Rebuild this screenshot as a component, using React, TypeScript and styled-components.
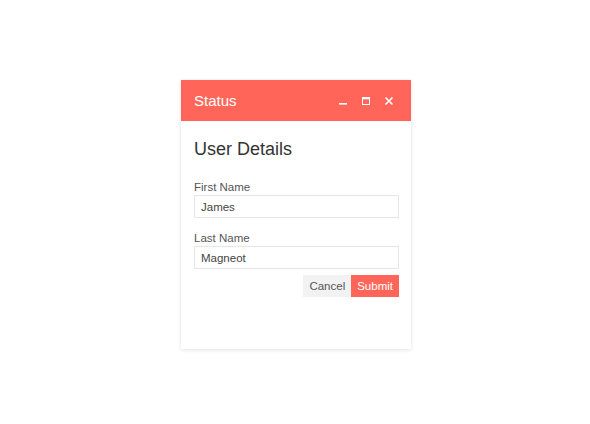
import React from 'react';
import styled, { createGlobalStyle } from 'styled-components';

const GlobalStyle = createGlobalStyle`
  html, body {
    margin: 0;
    padding: 0;
    background: #ffffff;
    font-family: "Liberation Sans", Arial, sans-serif;
  }
`;

const Page = styled.div`
  width: 590px;
  height: 424px;
  display: flex;
  justify-content: center;
  align-items: flex-start;
  padding: 80px 0 0 2px;
  box-sizing: border-box;
`;

const Window = styled.div`
  width: 230px;
  height: 269px;
  background: #fff;
  box-shadow: 0 1px 4px rgba(0, 0, 0, 0.12);
  display: flex;
  flex-direction: column;
`;

const TitleBar = styled.div`
  height: 41px;
  background: #ff6659;
  display: flex;
  align-items: center;
  padding: 0 13px;
  color: #fff;
`;

const Title = styled.div`
  flex: 1;
  font-size: 15px;
`;

const Controls = styled.div`
  display: flex;
  align-items: center;
  gap: 10px;
  margin-right: 3px;
`;

const ControlButton = styled.button`
  width: 13px;
  height: 13px;
  padding: 0;
  border: none;
  background: none;
  color: #fff;
  display: flex;
  align-items: center;
  justify-content: center;
  cursor: pointer;
`;

const Body = styled.div`
  padding: 18px 12px 0 13px;
  display: flex;
  flex-direction: column;
`;

const Heading = styled.h2`
  margin: 0 0 21px 0;
  font-size: 18px;
  font-weight: 400;
  color: #333;
`;

const Field = styled.div`
  display: flex;
  flex-direction: column;
  margin-bottom: 14px;
`;

const Label = styled.label`
  font-size: 11.5px;
  color: #555;
  margin-bottom: 2px;
`;

const Input = styled.input`
  height: 23px;
  box-sizing: border-box;
  border: 1px solid #e6e6e6;
  padding: 0 6px;
  font-family: inherit;
  font-size: 11.5px;
  color: #444;
  outline: none;
`;

const Actions = styled.div`
  display: flex;
  justify-content: flex-end;
  margin-top: -8px;
`;

const Button = styled.button<{ $primary?: boolean }>`
  height: 22px;
  padding: 0 6px;
  border: none;
  font-family: inherit;
  font-size: 11.5px;
  cursor: pointer;
  background: ${p => (p.$primary ? '#ff6659' : '#f2f2f2')};
  color: ${p => (p.$primary ? '#fff' : '#555')};
`;

export default function App() {
  return (
    <>
      <GlobalStyle />
      <Page>
        <Window>
          <TitleBar>
            <Title>Status</Title>
            <Controls>
              <ControlButton aria-label="minimize">
                <svg width="10" height="10" viewBox="0 0 10 10">
                  <rect x="1" y="7" width="8" height="1.6" fill="#fff" />
                </svg>
              </ControlButton>
              <ControlButton aria-label="maximize">
                <svg width="10" height="10" viewBox="0 0 10 10">
                  <rect x="1.5" y="1.5" width="7" height="7" fill="none" stroke="#fff" strokeWidth="1" />
                  <rect x="1.5" y="1.5" width="7" height="1.8" fill="#fff" />
                </svg>
              </ControlButton>
              <ControlButton aria-label="close">
                <svg width="10" height="10" viewBox="0 0 10 10">
                  <path d="M1.5 1.5 L8.5 8.5 M8.5 1.5 L1.5 8.5" stroke="#fff" strokeWidth="1.6" />
                </svg>
              </ControlButton>
            </Controls>
          </TitleBar>
          <Body>
            <Heading>User Details</Heading>
            <Field>
              <Label>First Name</Label>
              <Input defaultValue="James" />
            </Field>
            <Field>
              <Label>Last Name</Label>
              <Input defaultValue="Magneot" />
            </Field>
            <Actions>
              <Button>Cancel</Button>
              <Button $primary>Submit</Button>
            </Actions>
          </Body>
        </Window>
      </Page>
    </>
  );
}
